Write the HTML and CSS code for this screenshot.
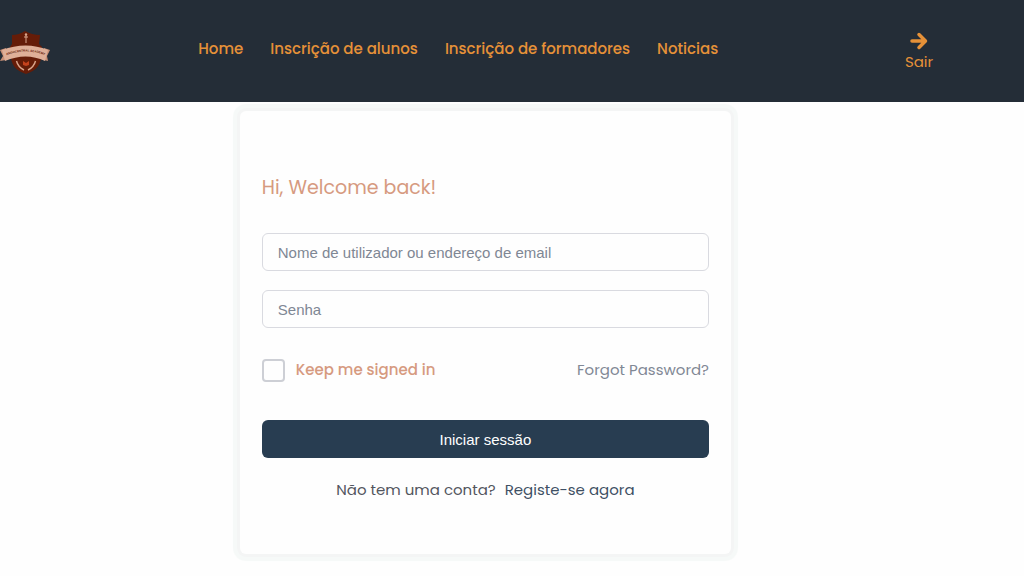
FILE: index.html
```html
<!DOCTYPE html>
<html lang="pt">
<head>
    <meta charset="UTF-8">
    <meta name="viewport" content="width=device-width, initial-scale=1.0">
    <title>Iniciar sessão</title>
    <link rel="stylesheet" href="styles.css">
</head>
<body>

    <!-- Header -->
    <header class="header">
        <a class="logo" href="#" aria-label="Academy">
            <svg width="52" height="46" viewBox="0 -2 52 46">
                <path d="M12 5 Q19 5 25 1 Q32 5 40 5 L39 14 L42 17 L42 22 H10 V17 L12 14 Z" fill="#651c08"/>
                <path d="M11 24 H41 Q42 39 26 44 Q10 39 11 24 Z" fill="#651c08"/>
                <path d="M26 5 V13 M24 7 H28" stroke="#d9a58c" stroke-width="1" fill="none"/>
                <circle cx="26" cy="4.5" r="1.2" fill="#d9a58c"/>
                <path d="M16.500 31 Q18 37 24 40 M35.500 31 Q34 37 28 40" stroke="#d9a58c" stroke-width="1.400" fill="none"/>
                <path d="M23 31 L26 33 L29 31 V35 L26 36 L23 35 Z" fill="#c5421d"/>
                <path d="M0 20 L6 18 L6 30 L0 31 L3 26 Z M50 20 L44 18 L44 30 L48 31 L47 26 Z" fill="#c78f76"/>
                <path d="M2 20 Q26 11 48 20 L45 31 Q26 22 5 31 Z" fill="#dfaf98"/>
                <path id="ribbon" d="M2 27 Q26 16 49 27" fill="none"/>
                <text class="logo-text"><textPath href="#ribbon" startOffset="50%">ANGOCENTRAL ACADEMY</textPath></text>
            </svg>
        </a>
        <nav class="nav">
            <a href="#">Home</a>
            <a href="#">Inscrição de alunos</a>
            <a href="#">Inscrição de formadores</a>
            <a href="#">Noticias</a>
        </nav>
        <a class="logout" href="#">
            <svg width="18" height="18" viewBox="0 0 18 18" fill="none" stroke="#e69138" stroke-width="3.5" stroke-linecap="round" stroke-linejoin="round">
                <path d="M2 9 H15 M9 2.500 L15.500 9 L9 15.500"/>
            </svg>
            <span>Sair</span>
        </a>
    </header>

    <!-- Login -->
    <main class="main">
        <form class="card">
            <h1 class="title">Hi, Welcome back!</h1>
            <div class="fields">
                <input class="field" type="text" aria-label="Nome de utilizador ou endereço de email" placeholder="Nome de utilizador ou endereço de email">
                <input class="field" type="password" aria-label="Senha" placeholder="Senha">
            </div>
            <div class="options">
                <label class="remember" for="remember">
                    <input type="checkbox" id="remember">
                    Keep me signed in
                </label>
                <a class="forgot" href="#">Forgot Password?</a>
            </div>
            <button class="submit" type="submit">Iniciar sessão</button>
            <p class="register">
                <span>Não tem uma conta?</span>
                <a href="#">Registe-se agora</a>
            </p>
        </form>
    </main>

</body>
</html>
```
FILE: styles.css
```css
/* Global Styles */
* {
    box-sizing: border-box;
}

body {
    margin: 0;
    font-family: 'Poppins', 'Inter', sans-serif;
    font-size: 15px;
    line-height: 24px;
    background: #fefefe;
}

a {
    text-decoration: none;
}

/* Header */
.header {
    display: grid;
    grid-template-columns: 10% 1fr 20.5%;
    align-items: center;
    min-height: 102px;
    background: #242d37;
}

.logo svg {
    display: block;
}

.logo-text {
    font-family: 'Liberation Sans', Arial, sans-serif;
    font-size: 3px;
    font-weight: bold;
    text-anchor: middle;
    fill: #651c08;
}

.nav {
    display: flex;
    flex-wrap: wrap;
    justify-content: center;
    gap: 4px 27px;
    padding-bottom: 4px;
    font-weight: 500;
}

.nav a,
.logout {
    color: #e69138;
}

.logout {
    display: flex;
    flex-direction: column;
    align-items: center;
    padding-top: 4px;
}

/* Login Card */
.main {
    display: flex;
    justify-content: center;
    padding: 9px 5.2% 22px 0;
}

.card {
    width: 50.6%;
    min-width: 300px;
    padding: 62px 22px 52px;
    border-radius: 6px;
    background: #fefefe;
    box-shadow: 0 0 0 3px #f4f5f5, 0 0 1px 7px #f6f9f8;
}

.title {
    margin: 0 0 30px;
    font-size: 19px;
    font-weight: 400;
    line-height: 30px;
    color: #d69a80;
}

.fields {
    display: grid;
    gap: 19px;
}

.field {
    width: 100%;
    height: 38px;
    padding: 0 15px;
    border: 1px solid #d9dae0;
    border-radius: 6px;
    background: #fefefe;
    font-family: 'Liberation Sans', Arial, sans-serif;
    font-size: 15px;
}

.field::placeholder {
    color: #7f8794;
}

.options {
    display: flex;
    flex-wrap: wrap;
    justify-content: space-between;
    margin: 30px 0 38px;
}

.remember {
    display: flex;
    align-items: center;
    gap: 11px;
    font-weight: 500;
    color: #d69a80;
}

.remember input {
    appearance: none;
    width: 23px;
    height: 23px;
    margin: 0;
    border: 2px solid #cdcfd5;
    border-radius: 4px;
}

.remember input:checked {
    background: #283d51;
}

.forgot {
    color: #818895;
}

.submit {
    display: block;
    width: 100%;
    height: 38px;
    border: none;
    border-radius: 6px;
    background: #283d51;
    color: #fff;
    font-family: 'Liberation Sans', Arial, sans-serif;
    font-size: 15px;
    cursor: pointer;
}

.register {
    display: flex;
    flex-wrap: wrap;
    justify-content: center;
    gap: 0 9px;
    margin: 20px 0 0;
    color: #53565e;
}

.register a {
    color: #3e5064;
}
```
